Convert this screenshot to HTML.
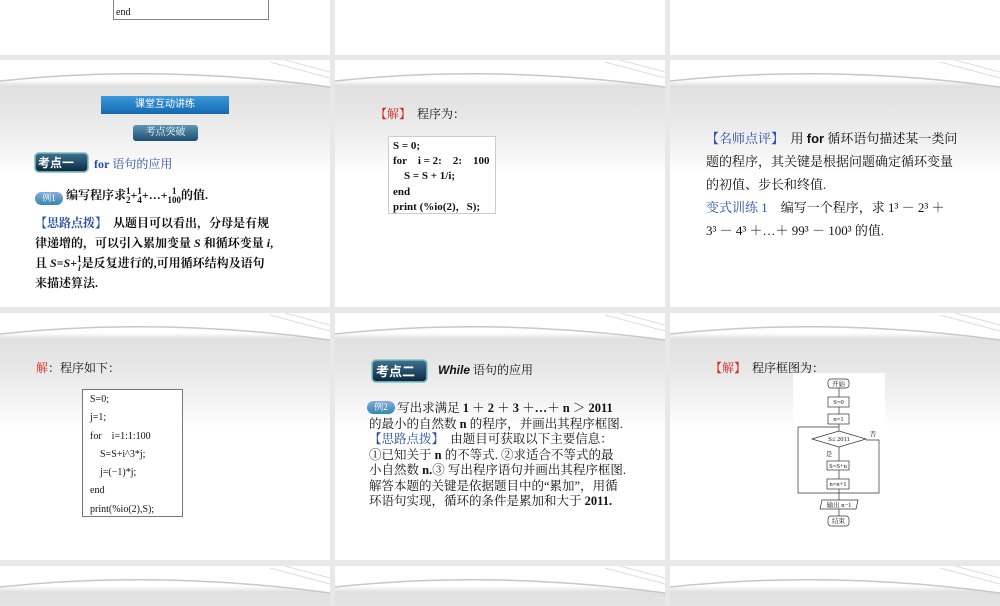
<!DOCTYPE html>
<html><head><meta charset="utf-8"><style>
*{margin:0;padding:0;box-sizing:border-box}
body{width:1000px;height:600px;background:#e8e8e8;position:relative;overflow:hidden;font-family:"Liberation Serif","Noto Serif CJK SC","Noto Sans CJK SC",serif;color:#111}
.s{position:absolute;background:linear-gradient(#fff 0,#fff 20px,#e0e0e0 26px,#e6e6e6 50px,#f2f2f2 85px,#fff 115px);overflow:hidden}
.s svg.sw{position:absolute;left:0;top:0}
.a{position:absolute;white-space:nowrap}
.red{color:#d42020}.blue{color:#2a4ea8}
.code{position:absolute;background:#fff;border:1px solid #ccc;font-weight:bold;font-size:11px}
.badge{position:absolute;background:linear-gradient(#3c6f8c,#0d2a44);border:1px solid #6aa;border-radius:4px;color:#fff;font-weight:bold;font-family:"Liberation Sans","Noto Sans CJK SC",sans-serif;box-shadow:0 0 0 1px #9cc}
.oval{position:absolute;background:linear-gradient(#8ad,#38a);border-radius:10px;color:#fff;font-size:9px;text-align:center}
.fr{display:inline-block;vertical-align:middle;text-align:center;font-size:9px;line-height:9px}
.fr span{display:block}
</style></head><body>

<!-- row 1 -->
<div class="s" style="left:0;top:0;width:330px;height:55px;background:#fff">
 <div class="code" style="left:113px;top:-2px;width:156px;height:22px;border-color:#888;font-weight:normal;font-size:10px"><span class="a" style="left:2px;top:8px">end</span></div>
</div>
<div class="s" style="left:335px;top:0;width:330px;height:55px;background:#fff"></div>
<div class="s" style="left:670px;top:0;width:330px;height:55px;background:#fff"></div>

<!-- row 2 -->
<div class="s" style="left:0;top:60px;width:330px;height:247px">
 <svg class="sw" width="330" height="40"><path d="M0 0H330V27Q160 4 0 21Z" fill="#fff"/><path d="M0 21 Q160 4 330 27" stroke="#c8c8c8" stroke-width="1.5" fill="none"/><path d="M270 2 L330 18 M285 0 L330 12" stroke="#ddd" fill="none"/></svg>
 <div class="a" style="left:101px;top:36px;width:128px;height:18px;background:linear-gradient(#3a98dc,#1468b0);color:#fff;font-size:10px;text-align:center;line-height:18px;font-family:'Liberation Sans','Noto Sans CJK SC',sans-serif">课堂互动讲练</div>
 <div class="a" style="left:133px;top:65px;width:65px;height:16px;background:linear-gradient(#5b97b5,#1e4d70);border-radius:3px;color:#fff;font-size:10px;text-align:center;line-height:16px">考点突破</div>
 <div class="badge" style="left:35px;top:93px;width:53px;height:19px;font-size:12px;line-height:18px;padding-left:2px">考点一</div>
 <div class="a blue" style="left:94px;top:95px;font-size:12px"><b>for</b> 语句的应用</div>
 <div class="oval" style="left:35px;top:132px;width:28px;height:13px;line-height:13px">例1</div>
 <div class="a" style="left:66px;top:126px;font-size:12px;font-weight:bold">编写程序求<span class="fr"><span>1</span><span>2</span></span>+<span class="fr"><span>1</span><span>4</span></span>+…+<span class="fr"><span>1</span><span>100</span></span>的值.</div>
 <div class="a" style="left:35px;top:153px;font-size:12px;font-weight:bold;line-height:20px"><span class="blue">【思路点拨】</span>　从题目可以看出，分母是有规<br>律递增的，可以引入累加变量 <i>S</i> 和循环变量 <i>i</i>,<br>且 <i>S</i>=<i>S</i>+<span class="fr"><span>1</span><span><i>i</i></span></span>是反复进行的,可用循环结构及语句<br>来描述算法.</div>
</div>

<div class="s" style="left:335px;top:60px;width:330px;height:247px">
 <svg class="sw" width="330" height="40"><path d="M0 0H330V27Q160 4 0 21Z" fill="#fff"/><path d="M0 21 Q160 4 330 27" stroke="#c8c8c8" stroke-width="1.5" fill="none"/><path d="M270 2 L330 18 M285 0 L330 12" stroke="#ddd" fill="none"/></svg>
 <div class="a" style="left:40px;top:45px;font-size:12px"><span class="red">【解】</span>　程序为：</div>
 <div class="code" style="left:53px;top:76px;width:108px;height:78px;line-height:15.2px;padding:2px 0 0 4px">S = 0;<br>for　i = 2:　2:　100<br>　S = S + 1/i;<br>end<br>print (%io(2)，S);</div>
</div>

<div class="s" style="left:670px;top:60px;width:330px;height:247px">
 <svg class="sw" width="330" height="40"><path d="M0 0H330V27Q160 4 0 21Z" fill="#fff"/><path d="M0 21 Q160 4 330 27" stroke="#c8c8c8" stroke-width="1.5" fill="none"/><path d="M270 2 L330 18 M285 0 L330 12" stroke="#ddd" fill="none"/></svg>
 <div class="a" style="left:36px;top:67px;font-size:13px;line-height:23px"><span class="blue">【名师点评】</span>　用 <b style="font-family:'Liberation Sans'">for</b> 循环语句描述某一类问<br>题的程序，其关键是根据问题确定循环变量<br>的初值、步长和终值.<br><span class="blue">变式训练 1</span>　编写一个程序，求 1³ － 2³ ＋<br>3³ － 4³ ＋…＋ 99³ － 100³ 的值.</div>
</div>

<!-- row 3 -->
<div class="s" style="left:0;top:313px;width:330px;height:247px">
 <svg class="sw" width="330" height="40"><path d="M0 0H330V27Q160 4 0 21Z" fill="#fff"/><path d="M0 21 Q160 4 330 27" stroke="#c8c8c8" stroke-width="1.5" fill="none"/><path d="M270 2 L330 18 M285 0 L330 12" stroke="#ddd" fill="none"/></svg>
 <div class="a" style="left:36px;top:46px;font-size:12px"><span class="red">解</span>：程序如下：</div>
 <div class="code" style="left:82px;top:76px;width:101px;height:128px;border-color:#777;font-weight:normal;font-size:10px;line-height:18.3px;padding:1px 0 0 7px">S=0;<br>j=1;<br>for　i=1:1:100<br>　S=S+i^3*j;<br>　j=(−1)*j;<br>end<br>print(%io(2),S);</div>
</div>

<div class="s" style="left:335px;top:313px;width:330px;height:247px">
 <svg class="sw" width="330" height="40"><path d="M0 0H330V27Q160 4 0 21Z" fill="#fff"/><path d="M0 21 Q160 4 330 27" stroke="#c8c8c8" stroke-width="1.5" fill="none"/><path d="M270 2 L330 18 M285 0 L330 12" stroke="#ddd" fill="none"/></svg>
 <div class="badge" style="left:37px;top:47px;width:55px;height:22px;font-size:13px;line-height:21px;padding-left:3px">考点二</div>
 <div class="a" style="left:103px;top:48px;font-size:12px"><b><i style="font-family:'Liberation Sans'">While</i></b> 语句的应用</div>
 <div class="oval" style="left:32px;top:88px;width:28px;height:13px;line-height:13px">例2</div>
 <div class="a" style="left:34px;top:88px;font-size:12.5px;line-height:15.5px">　　 写出求满足 <b>1 ＋ 2 ＋ 3 ＋…＋ n ＞ 2011</b><br>的最小的自然数 <b>n</b> 的程序，并画出其程序框图.<br><span class="blue">【思路点拨】</span>　由题目可获取以下主要信息：<br>①已知关于 <b>n</b> 的不等式. ②求适合不等式的最<br>小自然数 <b>n.</b>③ 写出程序语句并画出其程序框图.<br>解答本题的关键是依据题目中的“累加”，用循<br>环语句实现，循环的条件是累加和大于 <b>2011.</b></div>
</div>

<div class="s" style="left:670px;top:313px;width:330px;height:247px">
 <svg class="sw" width="330" height="40"><path d="M0 0H330V27Q160 4 0 21Z" fill="#fff"/><path d="M0 21 Q160 4 330 27" stroke="#c8c8c8" stroke-width="1.5" fill="none"/><path d="M270 2 L330 18 M285 0 L330 12" stroke="#ddd" fill="none"/></svg>
 <div class="a" style="left:40px;top:46px;font-size:12px"><span class="red">【解】</span>　程序框图为：</div>
 <svg class="a" style="left:0;top:0" width="330" height="247" font-size="6.5" font-family="Liberation Serif,Noto Serif CJK SC,serif">
  <rect x="123" y="60" width="92" height="150" fill="#fff"/>
  <g stroke="#333" stroke-width="0.7" fill="#fff">
   <rect x="158" y="66" width="21" height="9" rx="3"/>
   <rect x="158" y="84" width="21" height="10"/>
   <rect x="158" y="101" width="21" height="10"/>
   <polygon points="142,126 169,118 196,126 169,134"/>
   <rect x="157" y="148" width="22" height="9"/>
   <rect x="157" y="166" width="22" height="10"/>
   <polygon points="152,187 188,187 186,196 150,196"/>
   <rect x="158" y="203" width="21" height="10" rx="3"/>
   <path d="M169 75V84M169 94V101M169 111V118M169 134V148M169 157V166M169 176V187M169 196V203M128 114H169M128 114V180H209V127H196M169 180V187" fill="none"/>
  </g>
  <g fill="#111" text-anchor="middle">
   <text x="168.5" y="73">开始</text><text x="168.5" y="91">S=0</text><text x="168.5" y="108">n=1</text>
   <text x="169" y="128">S≤ 2011</text><text x="168" y="155">S=S+n</text><text x="168" y="173">n=n+1</text>
   <text x="169" y="194">输出 n−1</text><text x="168.5" y="210">结束</text>
   <text x="203" y="123">否</text><text x="159" y="143">是</text>
  </g>
 </svg>
</div>

<!-- row 4 -->
<div class="s" style="left:0;top:566px;width:330px;height:40px"><svg class="sw" width="330" height="40"><path d="M0 0H330V27Q160 4 0 21Z" fill="#fff"/><path d="M0 21 Q160 4 330 27" stroke="#c8c8c8" stroke-width="1.5" fill="none"/><path d="M270 2 L330 18 M285 0 L330 12" stroke="#ddd" fill="none"/></svg></div>
<div class="s" style="left:335px;top:566px;width:330px;height:40px"><svg class="sw" width="330" height="40"><path d="M0 0H330V27Q160 4 0 21Z" fill="#fff"/><path d="M0 21 Q160 4 330 27" stroke="#c8c8c8" stroke-width="1.5" fill="none"/><path d="M270 2 L330 18 M285 0 L330 12" stroke="#ddd" fill="none"/></svg></div>
<div class="s" style="left:670px;top:566px;width:330px;height:40px"><svg class="sw" width="330" height="40"><path d="M0 0H330V27Q160 4 0 21Z" fill="#fff"/><path d="M0 21 Q160 4 330 27" stroke="#c8c8c8" stroke-width="1.5" fill="none"/><path d="M270 2 L330 18 M285 0 L330 12" stroke="#ddd" fill="none"/></svg></div>
</body></html>
